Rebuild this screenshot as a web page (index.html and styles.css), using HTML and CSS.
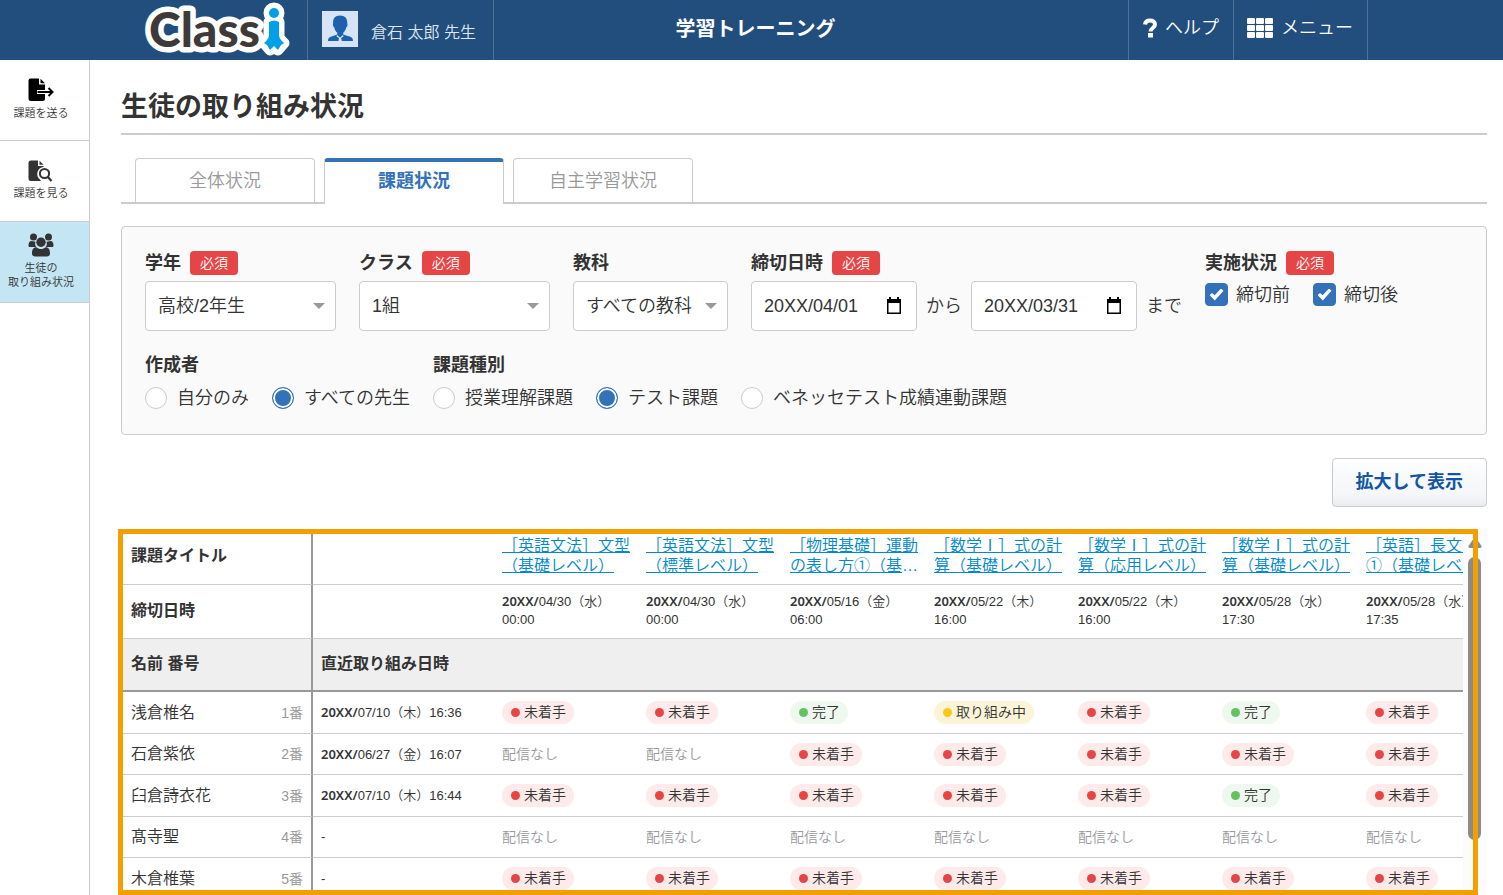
FILE: index.html
```html
<!DOCTYPE html>
<html lang="ja">
<head>
<meta charset="utf-8">
<meta name="viewport" content="width=device-width, initial-scale=1">
<title>学習トレーニング | 生徒の取り組み状況</title>
<link rel="stylesheet" href="styles.css">
</head>
<body>
<header class="topbar">
  <a class="logo" href="#" aria-label="Classi">
    <svg width="150" height="60" viewBox="0 0 150 60">
      <g stroke="#fff" stroke-width="11" stroke-linejoin="round" fill="#fff">
        <circle cx="131" cy="13" r="5"/>
        <path d="M126 22H136V36Q136 39 141 43L135 50L131 47L127 50L121 43Q126 39 126 36Z"/>
      </g>
      <text class="logo-text" x="6" y="47">Class</text>
      <circle cx="131" cy="13" r="5" fill="#00a0e9"/>
      <path d="M126 22Q131 19 136 22V35Q136 39 141 43L138 45L135 50L131 46L127 50L124 45L121 43Q126 39 126 35Z" fill="#00a0e9"/>
    </svg>
  </a>
  <div class="user">
    <svg class="avatar" width="36" height="36" viewBox="0 0 36 36">
      <rect width="36" height="36" fill="#d6e4f5"/>
      <path d="M18 4.500c5 0 7.500 3 7.200 7.500 .8 2-.1 4-1 4.500-.6 2.500-1.500 4-3 5.300v1.700l7 2.300c2 .8 2.800 2 2.800 4.200H6c0-2.200.8-3.400 2.800-4.200l6.500-2.300v-1.700c-1.600-1.300-2.500-2.800-3-5.300-1-.5-1.800-2.500-1.200-4.500-.3-4.500 2-7.500 6.900-7.500z" fill="#1d60ae"/>
      <path d="M15 24l3 2.500 3-2.500 .5 1.500-2.500 1.500h-2l-2.500-1.500z" fill="#d6e4f5"/>
      <path d="M17 27h2.200l.6 3h-3.400z" fill="#d6e4f5"/>
    </svg>
    <span class="user-name">倉石 太郎 先生</span>
  </div>
  <div class="app-title">学習トレーニング</div>
  <nav class="top-links">
    <a class="top-link" href="#">
      <svg width="14" height="20" viewBox="0 0 14 20"><path d="M2 6.500C2.300 3.800 4 2.500 7 2.500c3 0 5 1.500 5 4 0 3.500-4.500 3.500-4.500 7" fill="none" stroke="#fff" stroke-width="4"/><rect x="5" y="15" width="5" height="4.500" fill="#fff"/></svg>
      ヘルプ
    </a>
    <a class="top-link" href="#">
      <svg width="26" height="20" viewBox="0 0 26 20" fill="#fff"><rect width="8" height="6" rx="1"/><rect x="9" width="8" height="6" rx="1"/><rect x="18" width="8" height="6" rx="1"/><rect y="7" width="8" height="6" rx="1"/><rect x="9" y="7" width="8" height="6" rx="1"/><rect x="18" y="7" width="8" height="6" rx="1"/><rect y="14" width="8" height="6" rx="1"/><rect x="9" y="14" width="8" height="6" rx="1"/><rect x="18" y="14" width="8" height="6" rx="1"/></svg>
      メニュー
    </a>
  </nav>
</header>

<div class="layout">
  <nav class="sidebar">
    <a class="side-item" href="#">
      <svg width="26" height="24" viewBox="0 0 26 24"><path d="M2.500 0.500H11V6.500H17V12H9V16H17V20.500a2.500 2.500 0 0 1-2.500 2.500H3A2.500 2.500 0 0 1 .5 20.500V2.500a2 2 0 0 1 2-2zM12.500.8L17 5.300H12.500z" fill="#000"/><path d="M9.500 14H24M20.500 10l4 4-4 4" fill="none" stroke="#000" stroke-width="2"/></svg>
      課題を送る
    </a>
    <a class="side-item" href="#">
      <svg width="26" height="22" viewBox="0 0 26 22"><path d="M3 .5h7V6h5.500v1a7 7 0 0 0-3.500 12.500l1 1.500H3A2.500 2.500 0 0 1 .5 18.500V3A2.500 2.500 0 0 1 3 .5zM11.500.8L15.500 4.800h-4z" fill="#333"/><circle cx="16.500" cy="13.500" r="4.600" fill="none" stroke="#333" stroke-width="2"/><path d="M19.500 16.500l4 4.500" stroke="#333" stroke-width="2.200"/></svg>
      課題を見る
    </a>
    <a class="side-item side-item-active" href="#" aria-current="page">
      <svg width="26" height="24" viewBox="0 0 26 24" fill="#333"><circle cx="5.500" cy="4" r="3.500"/><circle cx="20.500" cy="4" r="3.500"/><path d="M.5 12.500C.5 9.500 1.500 8 3.500 8l4 .8c-1 3 .2 4.500 1 5.200H2C1 14 .5 13.500.5 12.500zM25.500 12.500c0-3-1-4.500-3-4.500l-4 .8c1 3-.2 4.500-1 5.200H24c1 0 1.500-.5 1.500-1.500z"/><circle cx="13" cy="9.300" r="4.700"/><path d="M4 20.500c0-4 1.300-6.300 4.300-6.300 1.500 1.200 3 1.800 4.700 1.800s3.200-.6 4.700-1.800c3 0 4.300 2.300 4.300 6.300 0 2-1.200 3-3 3H7c-1.800 0-3-1-3-3z"/></svg>
      <span>生徒の<br>取り組み状況</span>
    </a>
  </nav>

  <main class="main">
    <h1 class="page-title">生徒の取り組み状況</h1>

    <div class="tabs" role="tablist">
      <button class="tab" type="button" role="tab">全体状況</button>
      <button class="tab tab-active" type="button" role="tab" aria-selected="true">課題状況</button>
      <button class="tab" type="button" role="tab">自主学習状況</button>
    </div>

    <form class="filters">
      <div class="filter-row">
        <div class="field">
          <div class="field-head"><label for="grade">学年</label><span class="required">必須</span></div>
          <div class="select select-wide"><select id="grade"><option>高校/2年生</option></select></div>
        </div>
        <div class="field">
          <div class="field-head"><label for="class">クラス</label><span class="required">必須</span></div>
          <div class="select select-wide"><select id="class"><option>1組</option></select></div>
        </div>
        <div class="field">
          <div class="field-head"><label for="subject">教科</label></div>
          <div class="select select-narrow"><select id="subject"><option>すべての教科</option></select></div>
        </div>
        <div class="field">
          <div class="field-head"><label for="from">締切日時</label><span class="required">必須</span></div>
          <div class="dates">
            <div class="date"><input id="from" type="text" value="20XX/04/01"><svg width="14" height="17" viewBox="0 0 14 17"><path d="M2 0h2v2h6V0h2v2h2v15H0V2h2zM1.500 6v9.500h11V6z" fill="#000" fill-rule="evenodd"/></svg></div>
            <span>から</span>
            <div class="date"><input id="to" type="text" value="20XX/03/31" aria-label="締切日時 終了"><svg width="14" height="17" viewBox="0 0 14 17"><path d="M2 0h2v2h6V0h2v2h2v15H0V2h2zM1.500 6v9.500h11V6z" fill="#000" fill-rule="evenodd"/></svg></div>
            <span>まで</span>
          </div>
        </div>
        <fieldset class="field">
          <legend class="field-head">実施状況<span class="required">必須</span></legend>
          <div class="choices checks">
            <label class="choice"><input class="check" type="checkbox" checked>締切前</label>
            <label class="choice"><input class="check" type="checkbox" checked>締切後</label>
          </div>
        </fieldset>
      </div>
      <div class="filter-row">
        <fieldset class="field">
          <legend class="field-head">作成者</legend>
          <div class="choices radios">
            <label class="choice"><input class="radio" type="radio" name="author">自分のみ</label>
            <label class="choice"><input class="radio" type="radio" name="author" checked>すべての先生</label>
          </div>
        </fieldset>
        <fieldset class="field">
          <legend class="field-head">課題種別</legend>
          <div class="choices radios">
            <label class="choice"><input class="radio" type="radio" name="kind">授業理解課題</label>
            <label class="choice"><input class="radio" type="radio" name="kind" checked>テスト課題</label>
            <label class="choice"><input class="radio" type="radio" name="kind">ベネッセテスト成績連動課題</label>
          </div>
        </fieldset>
      </div>
    </form>

    <div class="actions"><button class="expand" type="button">拡大して表示</button></div>

    <section class="results">
      <div class="viewport">
        <table class="grid">
          <colgroup><col class="col-name"><col class="col-recent"><col span="7" class="col-task"></colgroup>
          <thead>
            <tr class="row-title">
              <th class="name">課題タイトル</th><th></th>
              <td><a class="task" href="#">［英語文法］文型（基礎レベル）</a></td>
              <td><a class="task" href="#">［英語文法］文型（標準レベル）</a></td>
              <td><a class="task" href="#">［物理基礎］運動の表し方①（基礎レベル）</a></td>
              <td><a class="task" href="#">［数学Ⅰ］式の計算（基礎レベル）</a></td>
              <td><a class="task" href="#">［数学Ⅰ］式の計算（応用レベル）</a></td>
              <td><a class="task" href="#">［数学Ⅰ］式の計算（基礎レベル）</a></td>
              <td><a class="task" href="#">［英語］長文読解①（基礎レベル）</a></td>
            </tr>
            <tr class="row-due">
              <th class="name">締切日時</th><th></th>
              <td><b class="year">20XX/</b>04/30（水）<br>00:00</td>
              <td><b class="year">20XX/</b>04/30（水）<br>00:00</td>
              <td><b class="year">20XX/</b>05/16（金）<br>06:00</td>
              <td><b class="year">20XX/</b>05/22（木）<br>16:00</td>
              <td><b class="year">20XX/</b>05/22（木）<br>16:00</td>
              <td><b class="year">20XX/</b>05/28（水）<br>17:30</td>
              <td><b class="year">20XX/</b>05/28（水）<br>17:35</td>
            </tr>
            <tr class="row-head">
              <th class="name">名前 番号</th><th colspan="8">直近取り組み日時</th>
            </tr>
          </thead>
          <tbody>
            <tr>
              <td class="name"><div class="student"><span>浅倉椎名</span><span class="number">1番</span></div></td>
              <td class="recent"><b class="year">20XX/</b>07/10（木）16:36</td>
              <td><span class="status todo">未着手</span></td>
              <td><span class="status todo">未着手</span></td>
              <td><span class="status done">完了</span></td>
              <td><span class="status doing">取り組み中</span></td>
              <td><span class="status todo">未着手</span></td>
              <td><span class="status done">完了</span></td>
              <td><span class="status todo">未着手</span></td>
            </tr>
            <tr>
              <td class="name"><div class="student"><span>石倉紫依</span><span class="number">2番</span></div></td>
              <td class="recent"><b class="year">20XX/</b>06/27（金）16:07</td>
              <td class="none">配信なし</td>
              <td class="none">配信なし</td>
              <td><span class="status todo">未着手</span></td>
              <td><span class="status todo">未着手</span></td>
              <td><span class="status todo">未着手</span></td>
              <td><span class="status todo">未着手</span></td>
              <td><span class="status todo">未着手</span></td>
            </tr>
            <tr>
              <td class="name"><div class="student"><span>臼倉詩衣花</span><span class="number">3番</span></div></td>
              <td class="recent"><b class="year">20XX/</b>07/10（木）16:44</td>
              <td><span class="status todo">未着手</span></td>
              <td><span class="status todo">未着手</span></td>
              <td><span class="status todo">未着手</span></td>
              <td><span class="status todo">未着手</span></td>
              <td><span class="status todo">未着手</span></td>
              <td><span class="status done">完了</span></td>
              <td><span class="status todo">未着手</span></td>
            </tr>
            <tr>
              <td class="name"><div class="student"><span>髙寺聖</span><span class="number">4番</span></div></td>
              <td class="recent">-</td>
              <td class="none">配信なし</td>
              <td class="none">配信なし</td>
              <td class="none">配信なし</td>
              <td class="none">配信なし</td>
              <td class="none">配信なし</td>
              <td class="none">配信なし</td>
              <td class="none">配信なし</td>
            </tr>
            <tr>
              <td class="name"><div class="student"><span>木倉椎葉</span><span class="number">5番</span></div></td>
              <td class="recent">-</td>
              <td><span class="status todo">未着手</span></td>
              <td><span class="status todo">未着手</span></td>
              <td><span class="status todo">未着手</span></td>
              <td><span class="status todo">未着手</span></td>
              <td><span class="status todo">未着手</span></td>
              <td><span class="status todo">未着手</span></td>
              <td><span class="status todo">未着手</span></td>
            </tr>
          </tbody>
        </table>
      </div>
      <div class="scrollbar">
        <svg width="14" height="11" viewBox="0 0 14 11"><path d="M6 1Q7 0 8 1L13.500 9Q14 11 12 11H2Q0 11 .5 9Z" fill="#8b8b8b"/></svg>
        <div class="thumb"></div>
      </div>
      <div class="highlight"></div>
    </section>
  </main>
</div>
</body>
</html>
```
FILE: styles.css
```css
* {
  box-sizing: border-box;
}

body {
  margin: 0;
  height: 100vh;
  display: flex;
  flex-direction: column;
  background: #fff;
  color: #333;
  font-family: "Liberation Sans", "Noto Sans CJK JP", sans-serif;
  font-size: 18px;
  font-weight: 350;
  line-height: 24px;
  overflow: hidden;
}

a {
  color: inherit;
  text-decoration: none;
}

button,
input,
select {
  font: inherit;
  color: inherit;
  margin: 0;
}

/* Header */
.topbar {
  flex: none;
  height: 60px;
  display: flex;
  padding: 0 135px 0 143px;
  background: #224e7e;
  color: #fff;
}

.logo {
  width: 164px;
}

.logo svg {
  display: block;
}

.logo-text {
  font-family: Lato, sans-serif;
  font-weight: 900;
  font-size: 48px;
  fill: #3e3a39;
  stroke: #fff;
  stroke-width: 11px;
  stroke-linejoin: round;
  paint-order: stroke;
}

.user {
  width: 187px;
  display: flex;
  gap: 13px;
  padding: 11px 0 0 14px;
  border: solid #4f7298;
  border-width: 0 1px;
}

.user-name {
  padding-top: 10px;
  font-size: 16px;
  color: #dfe6ee;
}

.app-title {
  flex: 1;
  padding: 17px 111px 0 0;
  text-align: center;
  font-size: 20px;
  font-weight: bold;
}

.top-links {
  display: flex;
}

.top-link {
  display: flex;
  align-items: center;
  gap: 8px;
  padding: 0 14px 4px 14px;
  border-left: 1px solid #4f7298;
}

.top-link:last-child {
  border-right: 1px solid #4f7298;
  padding-left: 13px;
}

/* Page frame */
.layout {
  flex: 1;
  min-height: 0;
  display: flex;
}

.sidebar {
  flex: none;
  width: 90px;
  border-right: 1px solid #ccc;
}

.side-item {
  height: 81px;
  display: flex;
  flex-direction: column;
  align-items: center;
  justify-content: center;
  gap: 4px;
  padding: 0 7px 2px 0;
  border-bottom: 1px solid #ccc;
  font-size: 11px;
  line-height: 14px;
  text-align: center;
}

.side-item-active {
  background: #c3e5f4;
}

.main {
  flex: 1;
  min-width: 0;
  display: flex;
  flex-direction: column;
  padding: 29px 16px 0 31px;
}

.page-title {
  margin: 0 0 23px;
  padding-bottom: 8px;
  border-bottom: 2px solid #ccc;
  font-size: 27px;
  line-height: 36px;
}

/* Tabs */
.tabs {
  display: flex;
  gap: 9px;
  height: 46px;
  margin-bottom: 22px;
  padding-left: 14px;
  box-shadow: inset 0 -2px #ccc;
}

.tab {
  width: 180px;
  margin-bottom: 2px;
  padding: 0;
  border: 1px solid #ccc;
  border-bottom: 0;
  border-radius: 4px 4px 0 0;
  background: #fff;
  color: #999;
}

.tab-active {
  margin-bottom: 0;
  border-top: 4px solid #3372b9;
  padding-bottom: 4px;
  color: #3372b9;
  font-weight: bold;
}

/* Filters */
.filters {
  display: flex;
  flex-direction: column;
  gap: 22px;
  padding: 24px 22px 25px 23px;
  border: 1px solid #ccc;
  border-radius: 4px;
  background: #fafafa;
}

.filter-row {
  display: flex;
  gap: 23px;
}

.field {
  margin: 0;
  padding: 0;
  border: 0;
  white-space: nowrap;
}

.field-head {
  display: flex;
  align-items: center;
  gap: 9px;
  padding: 0;
  font-weight: bold;
}

.required {
  padding: 0 10px;
  border-radius: 4px;
  background: #e64545;
  color: #fff;
  font-size: 14px;
  font-weight: 350;
}

.select,
.date {
  position: relative;
}

.select {
  margin-top: 6px;
}

.select-wide {
  width: 191px;
}

.select-narrow {
  width: 155px;
}

.select select,
.date input {
  display: block;
  width: 100%;
  height: 50px;
  padding: 0 12px;
  border: 1px solid #ccc;
  border-radius: 4px;
  background: #fff;
  appearance: none;
}

.select::after {
  content: "";
  position: absolute;
  right: 11px;
  top: 22px;
  border: solid transparent;
  border-width: 6px 6px 0;
  border-top-color: #999;
}

.dates {
  display: flex;
  align-items: center;
  gap: 9px;
  margin-top: 6px;
}

.date {
  width: 166px;
}

.date svg {
  position: absolute;
  right: 16px;
  top: 16px;
}

.choices {
  display: flex;
  gap: 23px;
}

.checks {
  margin-top: 8px;
}

.radios {
  margin-top: 10px;
}

.choice {
  display: flex;
  align-items: center;
  gap: 8px;
  line-height: 22px;
}

.radios .choice {
  gap: 10px;
}

.check {
  appearance: none;
  display: grid;
  place-items: center;
  width: 23px;
  height: 23px;
  border-radius: 4px;
  border: 1px solid #ccc;
}

.check:checked {
  border-color: #3372b9;
  background: #3372b9;
}

.check:checked::before {
  content: "";
  width: 14px;
  height: 12px;
  background: #fff;
  clip-path: polygon(0 55%, 18% 37%, 37% 56%, 82% 0, 100% 18%, 38% 100%);
}

.radio {
  appearance: none;
  width: 22px;
  height: 22px;
  border: 1px solid #ccc;
  border-radius: 50%;
  background: #fff;
}

.radio:checked {
  border-color: #3372b9;
  background: #3372b9;
  box-shadow: inset 0 0 0 2px #fff;
}

.actions {
  display: flex;
  justify-content: flex-end;
  margin: 23px 0 22px;
}

.expand {
  height: 49px;
  padding: 0 23px 2px;
  border: 1px solid #ccc;
  border-radius: 4px;
  background: linear-gradient(#fff, #f7f9fb 40%, #f5f7f9 75%, #eaedef);
  color: #1155a4;
  font-weight: bold;
}

/* Results */
.results {
  position: relative;
  flex: 1;
  min-height: 0;
  display: flex;
}

.viewport {
  flex: 1;
  min-width: 0;
  overflow: auto;
  scrollbar-width: none;
}

.grid {
  width: 1381px;
  table-layout: fixed;
  border-spacing: 0;
  font-size: 14px;
  line-height: 18px;
}

.col-name {
  width: 192px;
}

.col-recent {
  width: 181px;
}

.col-task {
  width: 144px;
}

.grid th,
.grid td {
  height: 41px;
  padding: 0 4px 0 8px;
  border-bottom: 1px solid #ccc;
  text-align: left;
  vertical-align: middle;
}

.grid tbody tr:nth-child(odd) > td {
  height: 42px;
}

.grid th {
  font-size: 16px;
}

.grid .name {
  padding: 0 8px 0 10px;
  border-right: 2px solid #999;
  font-size: 16px;
}

.grid .row-title > * {
  height: 56px;
  padding-bottom: 2px;
}

.grid .row-due > * {
  height: 54px;
  padding-bottom: 2px;
}

.grid .row-due > td,
.grid .recent {
  font-size: 13px;
}

.grid .row-head > * {
  height: 53px;
  padding-bottom: 2px;
  border-bottom: 2px solid #999;
  background: #efefef;
}

.task {
  display: -webkit-box;
  -webkit-box-orient: vertical;
  -webkit-line-clamp: 2;
  overflow: hidden;
  color: #08c;
  font-size: 16px;
  line-height: 20px;
  text-decoration: underline;
}

.year {
  font-family: "Noto Sans", sans-serif;
  font-size: 13px;
  font-weight: 600;
}

.student {
  display: flex;
  justify-content: space-between;
}

.number {
  color: #999;
  font-size: 14px;
}

.grid .none {
  color: #999;
}

.status {
  display: inline-flex;
  align-items: center;
  gap: 4px;
  padding: 0 8px 0 9px;
  border-radius: 12px;
  line-height: 23px;
  vertical-align: middle;
}

.status::before {
  content: "";
  width: 9px;
  height: 9px;
  border-radius: 50%;
}

.todo {
  background: #fdebeb;
}

.todo::before {
  background: #e64545;
}

.done {
  background: #eef8ef;
}

.done::before {
  background: #64c264;
}

.doing {
  background: #fcf4d9;
}

.doing::before {
  background: #fcc917;
}

.scrollbar {
  width: 24px;
  display: flex;
  flex-direction: column;
  align-items: center;
  gap: 9px;
  padding: 8px 1px 0 0;
  background: #fcfcfc;
}

.scrollbar svg {
  flex: none;
}

.thumb {
  width: 13px;
  height: 79%;
  border-radius: 7px;
  background: #8b8b8b;
}

.highlight {
  position: absolute;
  inset: 0 9px 0 -3px;
  border: 5px solid #f39f00;
  pointer-events: none;
}
```
